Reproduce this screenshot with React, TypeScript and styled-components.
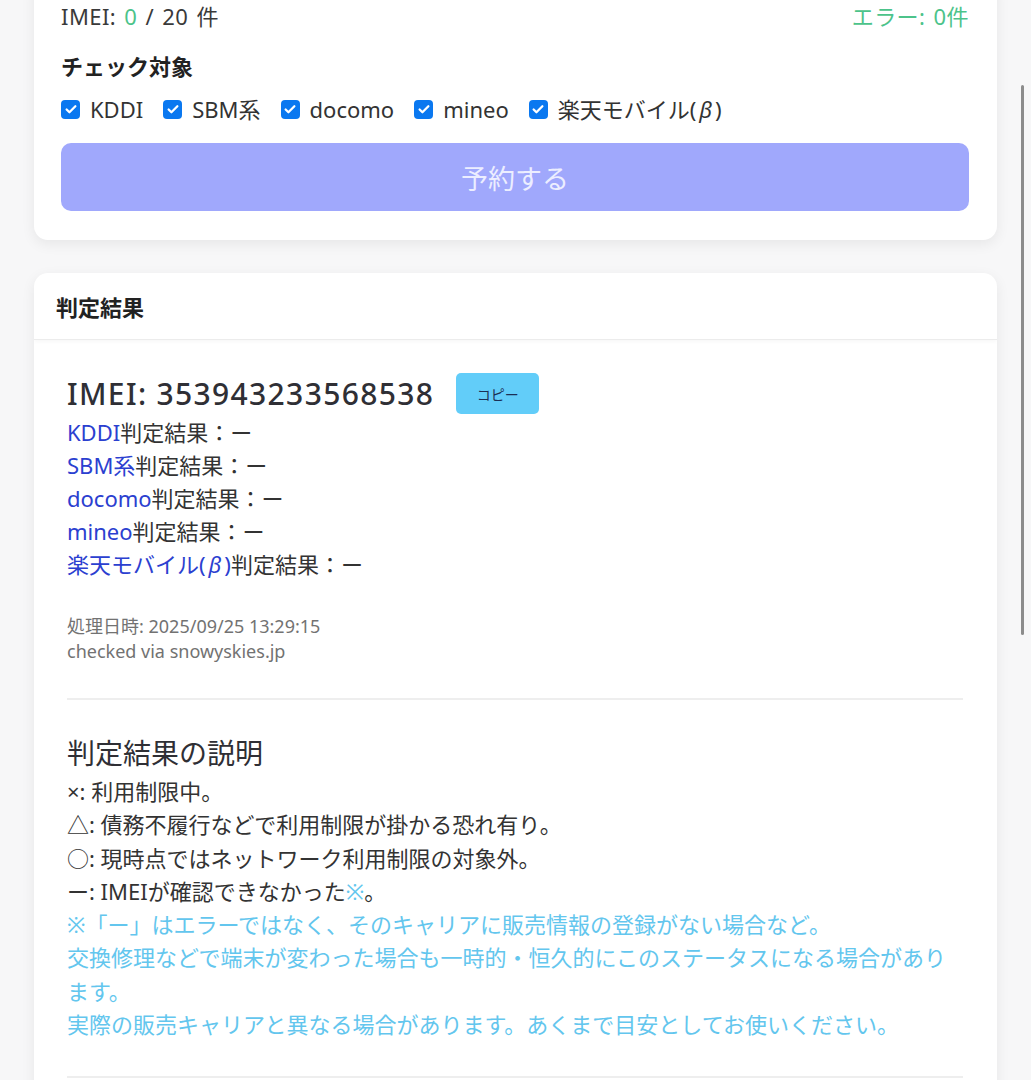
import React from "react";
import styled, { createGlobalStyle } from "styled-components";

const Global = createGlobalStyle`
  html, body { margin: 0; padding: 0; background: #f7f7f8; }
  body {
    font-family: "Noto Sans", "Noto Sans CJK JP", sans-serif;
    color: #333;
    -webkit-font-smoothing: antialiased;
  }
`;

const Page = styled.div`
  display: flex;
  flex-direction: column;
  gap: 33px;
  padding: 0 34px 40px 34px;
  width: 963px;
`;

const Card = styled.section<{ $cut?: boolean }>`
  background: #fff;
  border-radius: 14px;
  box-shadow: 0 4px 14px rgba(0, 0, 0, 0.07);
  margin-top: ${(p) => (p.$cut ? "-24px" : "0")};
  overflow: hidden;
`;

const FormBody = styled.div`
  display: flex;
  flex-direction: column;
  padding: 26px 28px 29px 27px;
`;

const CountRow = styled.div`
  display: flex;
  justify-content: space-between;
  font-size: 22px;
  line-height: 28px;
  color: #3a3a3a;
  letter-spacing: 0.02em;
  word-spacing: 2px;
`;

const Green = styled.span`
  color: #4cc38a;
`;

const SubTitle = styled.div`
  font-size: 22px;
  font-weight: 700;
  margin-top: 23px;
  line-height: 26px;
  color: #222;
`;

const CheckRow = styled.div`
  display: flex;
  align-items: center;
  gap: 20px;
  margin-top: 16px;
  font-size: 22px;
  color: #333;
  line-height: 28px;
`;

const CheckItem = styled.label`
  display: flex;
  align-items: center;
  gap: 10px;
`;

const Box = styled.span`
  width: 19px;
  height: 19px;
  border-radius: 4px;
  background: #0a78f0;
  display: inline-flex;
  align-items: center;
  justify-content: center;
`;

const Beta = styled.span`
  font-style: italic;
  padding: 0 3px;
`;

const ReserveButton = styled.button`
  margin-top: 20px;
  height: 68px;
  border: none;
  border-radius: 10px;
  background: #a0a8fc;
  color: #eceeff;
  font-family: inherit;
  font-size: 27px;
  width: 100%;
`;

const CardHeader = styled.header`
  height: 66px;
  display: flex;
  align-items: center;
  padding: 0 22px;
  font-size: 22px;
  font-weight: 700;
  color: #222;
  border-bottom: 1px solid #ececec;
  box-shadow: 0 2px 4px rgba(0, 0, 0, 0.03);
`;

const ResultBody = styled.div`
  display: flex;
  flex-direction: column;
  padding: 33px 34px 0 33px;
`;

const ImeiRow = styled.div`
  display: flex;
  align-items: center;
  gap: 22px;
  height: 41px;
`;

const ImeiTitle = styled.h2`
  margin: 0;
  font-size: 30px;
  font-weight: 500;
  letter-spacing: 0.045em;
  color: #2f2f35;
`;

const CopyButton = styled.button`
  height: 41px;
  width: 83px;
  border: none;
  border-radius: 5px;
  background: #62cdf9;
  color: #1c2f55;
  font-family: inherit;
  font-size: 14px;
`;

const Lines = styled.div`
  display: flex;
  flex-direction: column;
  font-size: 22px;
  line-height: 33px;
  color: #333;
  margin-top: 2px;
`;

const Carrier = styled.span`
  color: #2b40d0;
`;

const Meta = styled.div`
  margin-top: 33px;
  font-size: 18px;
  line-height: 25px;
  color: #727272;
`;

const Divider = styled.hr<{ $top: number }>`
  border: none;
  border-top: 2px solid #eeeeee;
  margin: ${(p) => p.$top}px 0 0 0;
`;

const ExplainTitle = styled.h3`
  margin: 36px 0 0 0;
  font-size: 28px;
  font-weight: 400;
  line-height: 34px;
  color: #2f2f35;
`;

const ExplainLines = styled.div`
  display: flex;
  flex-direction: column;
  font-size: 22px;
  line-height: 33.3px;
  color: #333;
  margin-top: 5px;
`;

const Note = styled.span`
  color: #63c6ee;
`;

const Spacer = styled.div`
  height: 200px;
`;

const Scrollbar = styled.div`
  position: fixed;
  right: 7px;
  top: 85px;
  width: 3px;
  height: 550px;
  border-radius: 2px;
  background: #8c8c8c;
`;

const Check = () => (
  <svg width="14" height="14" viewBox="0 0 16 16">
    <path d="M3 8.5l3.2 3.2L13 4.8" fill="none" stroke="#fff" strokeWidth="2.6" strokeLinecap="round" strokeLinejoin="round" />
  </svg>
);

const carriers: React.ReactNode[] = [
  "KDDI",
  "SBM系",
  "docomo",
  "mineo",
  <>
    楽天モバイル(<Beta>β</Beta>)
  </>,
];

export default function App() {
  return (
    <>
      <Global />
      <Page>
        <Card $cut>
          <FormBody>
            <CountRow>
              <span>
                IMEI: <Green>0</Green> / 20 件
              </span>
              <Green>エラー: 0件</Green>
            </CountRow>
            <SubTitle>チェック対象</SubTitle>
            <CheckRow>
              {carriers.map((c, i) => (
                <CheckItem key={i}>
                  <Box>
                    <Check />
                  </Box>
                  <span>{c}</span>
                </CheckItem>
              ))}
            </CheckRow>
            <ReserveButton>予約する</ReserveButton>
          </FormBody>
        </Card>

        <Card>
          <CardHeader>判定結果</CardHeader>
          <ResultBody>
            <ImeiRow>
              <ImeiTitle>IMEI: 353943233568538</ImeiTitle>
              <CopyButton>コピー</CopyButton>
            </ImeiRow>
            <Lines>
              {carriers.map((c, i) => (
                <div key={i}>
                  <Carrier>{c}</Carrier>判定結果：ー
                </div>
              ))}
            </Lines>
            <Meta>
              <div>処理日時: 2025/09/25 13:29:15</div>
              <div>checked via snowyskies.jp</div>
            </Meta>
            <Divider $top={34} />
            <ExplainTitle>判定結果の説明</ExplainTitle>
            <ExplainLines>
              <div>×: 利用制限中。</div>
              <div>△: 債務不履行などで利用制限が掛かる恐れ有り。</div>
              <div>○: 現時点ではネットワーク利用制限の対象外。</div>
              <div>
                ー: IMEIが確認できなかった<Note>※</Note>。
              </div>
              <Note>※「ー」はエラーではなく、そのキャリアに販売情報の登録がない場合など。</Note>
              <Note>交換修理などで端末が変わった場合も一時的・恒久的にこのステータスになる場合があります。</Note>
              <Note>実際の販売キャリアと異なる場合があります。あくまで目安としてお使いください。</Note>
            </ExplainLines>
            <Divider $top={35} />
            <Spacer />
          </ResultBody>
        </Card>
      </Page>
      <Scrollbar />
    </>
  );
}
